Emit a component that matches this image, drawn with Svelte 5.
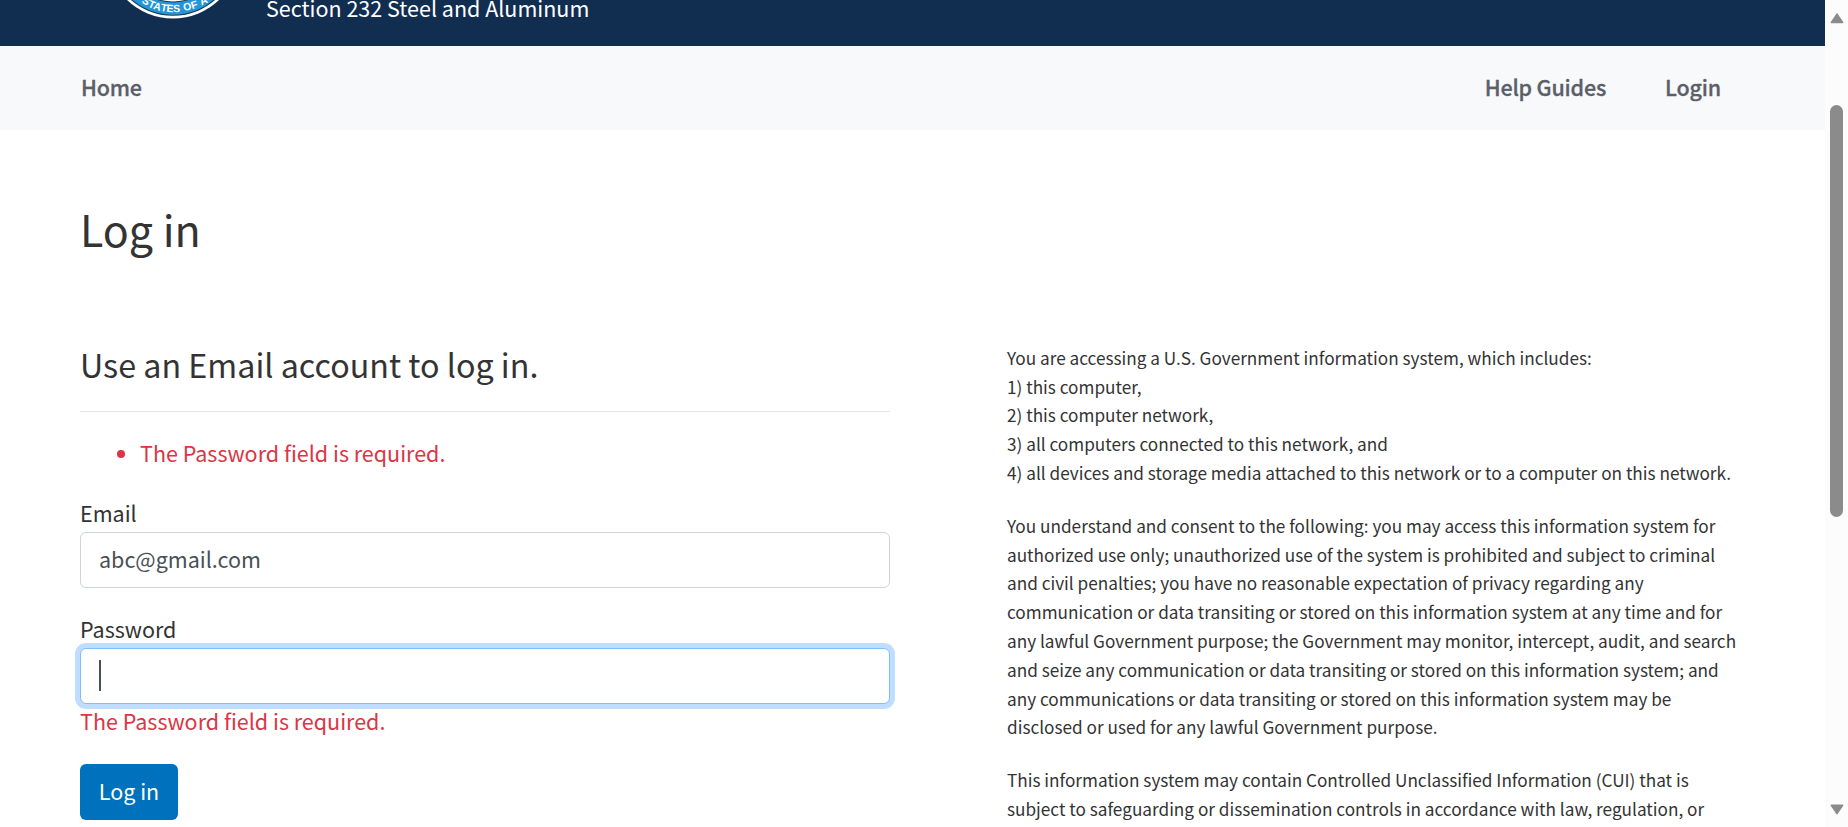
<script>
  const includes = [
    'You are accessing a U.S. Government information system, which includes:',
    '1) this computer,',
    '2) this computer network,',
    '3) all computers connected to this network, and',
    '4) all devices and storage media attached to this network or to a computer on this network.'
  ];
  const consent = [
    'You understand and consent to the following: you may access this information system for',
    'authorized use only; unauthorized use of the system is prohibited and subject to criminal',
    'and civil penalties; you have no reasonable expectation of privacy regarding any',
    'communication or data transiting or stored on this information system at any time and for',
    'any lawful Government purpose; the Government may monitor, intercept, audit, and search',
    'and seize any communication or data transiting or stored on this information system; and',
    'any communications or data transiting or stored on this information system may be',
    'disclosed or used for any lawful Government purpose.'
  ];
  const controlled = [
    'This information system may contain Controlled Unclassified Information (CUI) that is',
    'subject to safeguarding or dissemination controls in accordance with law, regulation, or'
  ];
  const notices = [includes, consent, controlled];
  let email = $state('abc@gmail.com');
</script>

<div class="window">
  <div class="page">
    <header class="banner">
      <svg class="seal" width="120" height="19" viewBox="0 0 120 19">
        <circle cx="60" cy="-48" r="66.5" fill="#fff" />
        <circle cx="60" cy="-48" r="63.8" fill="#17384f" />
        <circle cx="60" cy="-48" r="62.8" fill="#2296d8" />
        <circle cx="60" cy="-48" r="50.5" fill="#17384f" />
        <circle cx="60" cy="-48" r="49.5" fill="#fff" />
        <g class="rim-text">
          <text transform="translate(28.3 2.6) rotate(29)">S</text>
          <text transform="translate(34.6 6.4) rotate(23)">T</text>
          <text transform="translate(39.8 8.8) rotate(17)">A</text>
          <text transform="translate(47.2 10.7) rotate(11)">T</text>
          <text transform="translate(53.2 11.7) rotate(5)">E</text>
          <text transform="translate(60.2 12.3) rotate(-2)">S</text>
          <text transform="translate(71 11) rotate(-12)">O</text>
          <text transform="translate(79.2 9.2) rotate(-18)">F</text>
          <text transform="translate(88.6 5.4) rotate(-25)">A</text>
        </g>
      </svg>
      <span class="program">Section 232 Steel and Aluminum</span>
    </header>

    <nav>
      <a href="#home" class="home">Home</a>
      <a href="#guides" class="guides">Help Guides</a>
      <a href="#login" class="login">Login</a>
    </nav>

    <main>
      <h1>Log in</h1>
      <div class="columns">
        <form>
          <h4>Use an Email account to log in.</h4>
          <ul><li><span class="error">The Password field is required.</span></li></ul>
          <label for="email">Email</label>
          <input id="email" type="text" bind:value={email} />
          <label for="password" class="second">Password</label>
          <div id="password" class="field focused"><i class="caret"></i></div>
          <span class="error under">The Password field is required.</span>
          <button type="button"><span>Log in</span></button>
        </form>
        <section>
          {#each notices as lines}
            <p>
              {#each lines as line}<span>{line}</span>{/each}
            </p>
          {/each}
        </section>
      </div>
    </main>
  </div>

  <aside class="scrollbar">
    <svg width="14" height="11" viewBox="0 0 14 11"><path d="M7 1.2 L12.6 9.4 H1.4 Z" fill="#8b8b8b" stroke="#8b8b8b" stroke-width="1.6" stroke-linejoin="round" /></svg>
    <div class="thumb"></div>
    <svg class="down" width="14" height="11" viewBox="0 0 14 11"><path d="M7 9.6 L12.6 1.4 H1.4 Z" fill="#8b8b8b" stroke="#8b8b8b" stroke-width="1.6" stroke-linejoin="round" /></svg>
  </aside>
</div>

<style>
  :global(body) { margin: 0; overflow: hidden; background: #fff; }
  .window {
    display: flex;
    width: 1848px;
    height: 827px;
    overflow: hidden;
    color: #333;
    font: 400 21.5px/36px 'Noto Sans CJK SC', 'Noto Sans', sans-serif;
  }
  .window * { box-sizing: border-box; }
  .page { width: 1825px; height: 827px; overflow: hidden; }
  .banner {
    display: flex;
    height: 46px;
    padding-left: 113px;
    background: #112e51;
    color: #fff;
  }
  .seal { flex: none; display: block; }
  .rim-text { fill: #fff; font: 700 10.5px 'Liberation Sans', Arial, sans-serif; }
  .program { margin: -10px 0 0 33px; height: 36px; white-space: nowrap; }
  nav {
    display: flex;
    align-items: center;
    height: 84px;
    padding: 0 104px 2px 81px;
    background: #f8f9fb;
    font-weight: 500;
    letter-spacing: -0.2px;
    -webkit-text-stroke: 0.3px #5c5f68;
  }
  nav a { color: #5c5f68; text-decoration: none; white-space: nowrap; }
  .home { flex: 1; }
  .guides { margin-right: 59px; }
  main { padding: 69px 80px 0; }
  h1 { margin: 0; height: 58px; font-size: 43px; line-height: 58px; font-weight: 400; }
  .columns { display: flex; margin-top: 86px; }
  form { display: flex; flex-direction: column; width: 810px; }
  h4 {
    margin: 0;
    height: 69px;
    border-bottom: 1px solid #e4e5e5;
    font-size: 32.25px;
    line-height: 43px;
    font-weight: 400;
    white-space: nowrap;
  }
  ul { margin: 23px 0 0; padding: 0 0 0 60px; height: 36px; color: #dc3545; }
  li { padding: 0; }
  label { display: block; height: 37px; margin-top: 24px; }
  label.second { margin-top: 23px; }
  input, .field {
    display: flex;
    align-items: center;
    width: 810px;
    height: 56px;
    padding: 0 18px 3px;
    border: 1px solid #ced4da;
    border-radius: 6px;
    background: #fff;
    color: #495057;
    font: inherit;
    outline: none;
  }
  .focused { padding-bottom: 1px; border-color: #80bdff; box-shadow: 0 0 0 5px #bfdeff; }
  .caret { width: 2px; height: 31px; background: #495057; }
  .error { color: #dc3545; white-space: nowrap; }
  .under { height: 37px; margin-top: -1px; }
  button {
    width: 98px;
    height: 56px;
    margin-top: 24px;
    padding: 0 0 2px;
    border: 0;
    border-radius: 6px;
    background: #0071bc;
    color: #fff;
    font: inherit;
  }
  section { margin: 0.8px 0 0 117px; font-size: 17.2px; line-height: 28.8px; }
  p { margin: 0 0 24px; }
  p span { display: block; white-space: nowrap; }
  .scrollbar {
    display: flex;
    flex-direction: column;
    align-items: center;
    width: 23px;
    height: 827px;
    padding-top: 13px;
    background: #fcfcfc;
  }
  .thumb { width: 13px; height: 412px; margin-top: 81px; border-radius: 7px; background: #8b8b8b; }
  .down { margin-top: 287px; }
</style>
